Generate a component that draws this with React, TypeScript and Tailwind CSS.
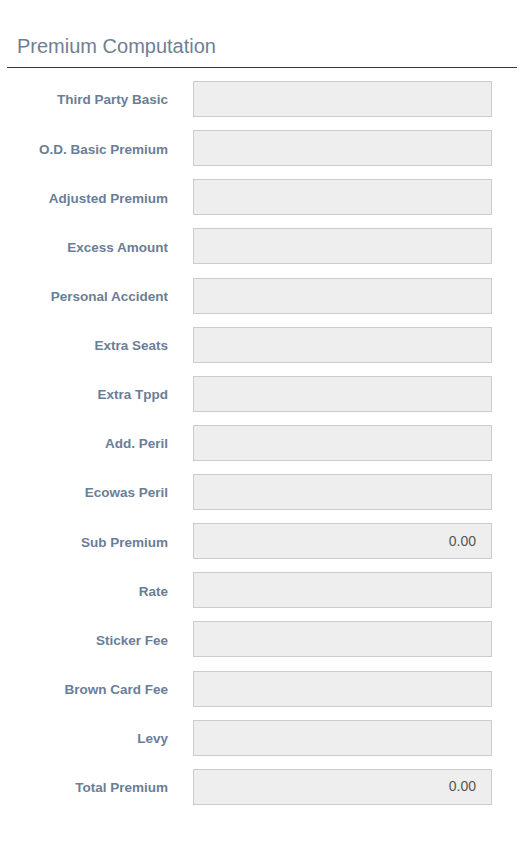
import React from 'react';

const fields: { label: string; value?: string }[] = [
  { label: 'Third Party Basic' },
  { label: 'O.D. Basic Premium' },
  { label: 'Adjusted Premium' },
  { label: 'Excess Amount' },
  { label: 'Personal Accident' },
  { label: 'Extra Seats' },
  { label: 'Extra Tppd' },
  { label: 'Add. Peril' },
  { label: 'Ecowas Peril' },
  { label: 'Sub Premium', value: '0.00' },
  { label: 'Rate' },
  { label: 'Sticker Fee' },
  { label: 'Brown Card Fee' },
  { label: 'Levy' },
  { label: 'Total Premium', value: '0.00' },
];

export default function App() {
  return (
    <div className="min-h-screen bg-white pl-[7px] pr-[10px] pt-[35px]" style={{ fontFamily: '"Liberation Sans", Arial, sans-serif' }}>
      {/* Header */}
      <div className="border-b border-[#333a45] pb-[9px] pl-[10px]">
        <h2 className="text-[20px] leading-[23px] text-[#6f7e94]">Premium Computation</h2>
      </div>

      {/* Fields */}
      <div className="pt-[13px]">
        {fields.map((f) => (
          <div key={f.label} className="flex items-center h-[36px] mb-[13.14px]">
            <label className="w-[161px] pt-[3px] text-right text-[13.5px] font-bold text-[#6a7e98]">{f.label}</label>
            <div className="ml-[25px] w-[299px] h-[36px] bg-[#eeeeee] border border-[#cccccc] flex items-center justify-end pr-[15px] text-[14px] text-[#555555]">
              {f.value}
            </div>
          </div>
        ))}
      </div>
    </div>
  );
}
